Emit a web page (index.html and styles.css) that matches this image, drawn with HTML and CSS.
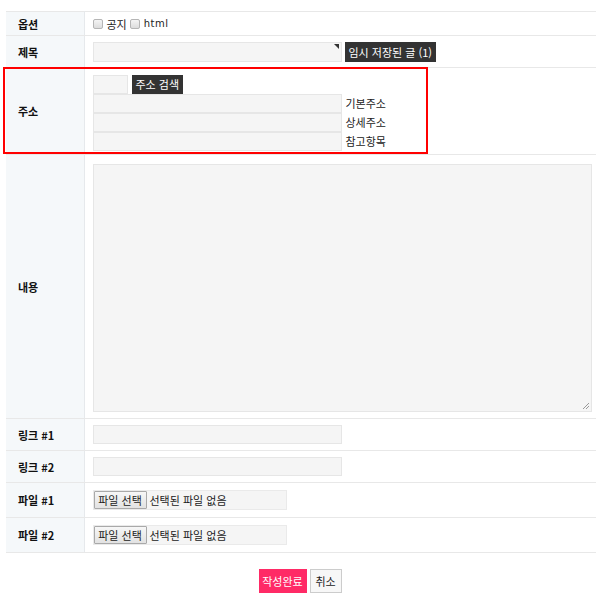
FILE: index.html
```html
<!DOCTYPE html>
<html lang="ko">
<head>
<meta charset="utf-8">
<link rel="stylesheet" href="styles.css">
</head>
<body>
<div class="wrap">
  <table class="form">
    <tr class="r-opt">
      <th>옵션</th>
      <td><label class="chk"><span class="box"></span>공지</label><label class="chk"><span class="box"></span><span class="latin">html</span></label></td>
    </tr>
    <tr class="r-title">
      <th>제목</th>
      <td><div class="line"><span class="inp inp-w title-inp"><span class="tri"></span></span><span class="btn-dark">임시 저장된 글 (1)</span></div></td>
    </tr>
    <tr class="r-addr">
      <th>주소</th>
      <td>
        <div class="line"><span class="inp zip"></span><span class="btn-dark small">주소 검색</span></div>
        <div class="line"><span class="inp inp-w addr"></span><span class="lbl">기본주소</span></div>
        <div class="line"><span class="inp inp-w addr"></span><span class="lbl">상세주소</span></div>
        <div class="line"><span class="inp inp-w addr"></span><span class="lbl">참고항목</span></div>
      </td>
    </tr>
    <tr class="r-body">
      <th>내용</th>
      <td><div class="textarea"><svg class="grip" width="8" height="8" viewBox="0 0 8 8"><path d="M7 1L1 7M7 4L4 7" stroke="#999" stroke-width="1"/></svg></div></td>
    </tr>
    <tr class="r-link">
      <th>링크 #1</th>
      <td><span class="inp inp-w"></span></td>
    </tr>
    <tr class="r-link">
      <th>링크 #2</th>
      <td><span class="inp inp-w"></span></td>
    </tr>
    <tr class="r-file">
      <th>파일 #1</th>
      <td><div class="file"><span class="file-btn">파일 선택</span><span class="file-txt">선택된 파일 없음</span></div></td>
    </tr>
    <tr class="r-file">
      <th>파일 #2</th>
      <td><div class="file"><span class="file-btn">파일 선택</span><span class="file-txt">선택된 파일 없음</span></div></td>
    </tr>
  </table>
  <div class="actions">
    <span class="btn-submit">작성완료</span><span class="btn-cancel">취소</span>
  </div>
  <div class="highlight"></div>
</div>
</body>
</html>
```
FILE: styles.css
```css
* { box-sizing: border-box; }
html, body { margin: 0; padding: 0; background: #fff; }
body { font-family: "Noto Sans CJK KR", "Noto Sans", sans-serif; font-size: 11px; color: #222; }
.wrap { position: relative; padding: 11px 4px 0 6px; }
.form { width: 590px; border-collapse: collapse; border-top: 1px solid #e8e8e8; }
.form th, .form td { border-bottom: 1px solid #e8e8e8; padding: 0; vertical-align: middle; }
.form th { width: 78px; background: #f5f8fa; border-right: 1px solid #e6e9ec; text-align: left; padding-left: 12px; font-weight: bold; font-size: 11px; color: #111; }
.form td { padding-left: 8px; }
.r-opt th, .r-opt td { height: 24px; }
.r-title th, .r-title td { height: 32px; }
.r-addr th, .r-addr td { height: 87px; }
.r-addr td { padding-top: 6px; padding-bottom: 3px; }
.r-body th, .r-body td { height: 264px; }
.r-body td { padding-top: 8px; padding-bottom: 6px; }
.r-link th, .r-link td { height: 32px; }
.r-file th, .r-file td { height: 35px; }
.chk { display: inline-flex; align-items: center; margin-right: 3px; line-height: 14px; }
.box { width: 10px; height: 10px; border: 1px solid #b5b5b5; border-radius: 2px; background: linear-gradient(#f4f4f4, #dcdcdc); margin-right: 4px; }
.latin { font-family: "DejaVu Sans", sans-serif; font-size: 10px; letter-spacing: 0.5px; }
.line { display: flex; align-items: center; }
.inp { display: inline-block; height: 20px; background: #f5f5f5; border: 1px solid #e6e6e6; }
.inp-w { width: 249px; }
.title-inp { position: relative; }
.tri { position: absolute; right: 2px; top: 1px; width: 0; height: 0; border-top: 5px solid #333; border-left: 5px solid transparent; }
.btn-dark { display: inline-flex; align-items: center; height: 20px; margin-left: 3px; padding: 0 4px; background: #333; color: #fff; font-size: 11px; }
.btn-dark.small { margin-left: 4px; height: 19px; }
.zip { width: 35px; height: 19px; }
.addr { height: 19px; }
.lbl { margin-left: 4px; font-size: 11px; color: #222; }
.textarea { position: relative; width: 499px; height: 248px; background: #f5f5f5; border: 1px solid #e6e6e6; }
.grip { position: absolute; right: 1px; bottom: 1px; }
.r-link .inp { height: 19px; vertical-align: middle; }
.file { display: flex; align-items: center; width: 194px; height: 20px; background: #f5f5f5; border: 1px solid #eaeaea; }
.file-btn { display: inline-flex; align-items: center; justify-content: center; height: 18px; width: 53px; margin-left: 0; background: linear-gradient(#f7f7f7, #e2e2e2); border: 1px solid #a9a9a9; border-radius: 1px; font-size: 11px; color: #222; }
.file-txt { margin-left: 3px; font-size: 11px; color: #222; }
.actions { display: flex; justify-content: center; gap: 3px; padding-top: 16px; padding-right: 2px; }
.btn-submit { display: inline-flex; align-items: center; justify-content: center; width: 48px; height: 24px; background: #ff2a66; color: #fff; font-size: 11px; }
.btn-cancel { display: inline-flex; align-items: center; justify-content: center; width: 32px; height: 24px; background: #f7f7f7; border: 1px solid #ccc; color: #222; font-size: 11px; }
.highlight { position: absolute; left: 3px; top: 67px; width: 425px; height: 87px; border: 2px solid #f00; pointer-events: none; }
```
